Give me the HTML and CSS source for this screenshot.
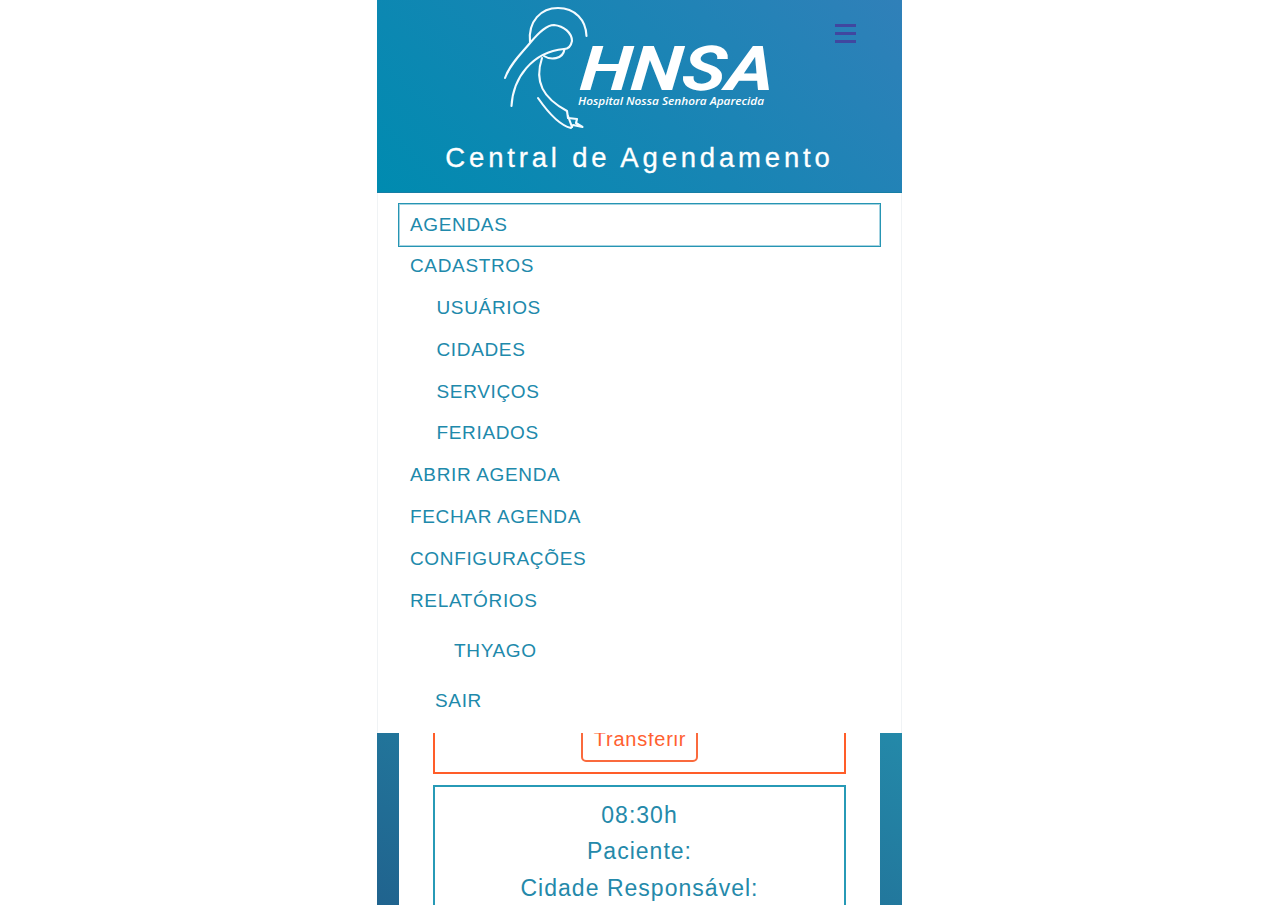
FILE: index.html
```html
<!DOCTYPE html>
<html lang="pt-BR">
<head>
<meta charset="utf-8">
<title>Central de Agendamento</title>
<link rel="stylesheet" href="styles.css">
</head>
<body>
<div class="phone">
  <header class="header">
    <svg class="logo" viewBox="0 0 290 134" role="img" aria-label="HNSA">
      <g class="figure">
        <path d="M40 42C38 21 51 8 68 8C85 8 96 20 96.500 36"/>
        <path d="M15 78C20 64 31 54 40 43C50 31 57 25 64 25C74 26 82 33 82 41C81 46 79 49 74 49C42 52 23 78 21.500 106"/>
        <path d="M54 56C60 60 73 60 74.500 49"/>
        <path d="M52 58C44 82 53 98 77 111L78 118L87 119L86 123L92.500 127L83 125L81 128C68 125 57 111 48 98"/>
        <path d="M78 116L82 127"/>
      </g>
      <text class="brand" transform="translate(89 90) skewX(-5)" textLength="194" lengthAdjust="spacingAndGlyphs">HNSA</text>
      <text class="tagline" x="88" y="105" textLength="186" lengthAdjust="spacingAndGlyphs">Hospital Nossa Senhora Aparecida</text>
    </svg>
    <button class="toggle" aria-label="Menu"><i></i><i></i><i></i></button>
    <h1 class="title">Central de Agendamento</h1>
  </header>
  <nav class="menu">
    <a class="item active">AGENDAS</a>
    <a class="item">CADASTROS</a>
    <a class="item sub">USUÁRIOS</a>
    <a class="item sub">CIDADES</a>
    <a class="item sub">SERVIÇOS</a>
    <a class="item sub">FERIADOS</a>
    <a class="item">ABRIR AGENDA</a>
    <a class="item">FECHAR AGENDA</a>
    <a class="item">CONFIGURAÇÕES</a>
    <a class="item">RELATÓRIOS</a>
    <a class="item user">THYAGO</a>
    <a class="item exit">SAIR</a>
  </nav>
  <main class="page">
    <div class="sheet">
      <section class="card busy"><button class="transfer">Transferir</button></section>
      <section class="card free">
        <p>08:30h</p>
        <p>Paciente:</p>
        <p>Cidade Responsável:</p>
      </section>
    </div>
  </main>
</div>
</body>
</html>
```
FILE: styles.css
```css
* { box-sizing: border-box; }
body { margin: 0; height: 905px; overflow: hidden; background: #fff; font-family: "Liberation Sans", Arial, sans-serif; }
.phone { width: 525px; height: 905px; margin-left: 377px; display: flex; flex-direction: column; overflow: hidden; }
.header { position: relative; flex: none; height: 193px; background: linear-gradient(45deg, #008bb0 0%, #1785b4 50%, #3080b9 100%); border-bottom: 1px solid #167ea5; display: flex; flex-direction: column; align-items: center; }
.logo { display: block; width: 290px; height: 134px; margin-left: -9px; overflow: visible; }
.figure { fill: none; stroke: #f4fbff; stroke-width: 2.1; stroke-linecap: round; stroke-linejoin: round; }
.brand { font: italic 700 62px Roboto, sans-serif; fill: #fff; }
.tagline { font: italic 600 10.2px "Open Sans", sans-serif; fill: #fff; }
.toggle { position: absolute; left: 457px; top: 24px; width: 23px; height: 20px; padding: 0 1px; border: 0; background: none; display: flex; flex-direction: column; gap: 5px; }
.toggle i { height: 3px; flex: none; background: #4047a0; }
.title { margin: 6px 0 0; font-size: 27.5px; font-weight: 400; line-height: 36px; letter-spacing: 3.82px; color: #fff; white-space: nowrap; -webkit-text-stroke: 0.3px #fff; }
.menu { flex: none; height: 540px; padding: 10px 20px 0; background: #fff; border: solid #f0f3f5; border-width: 0 1px; display: flex; flex-direction: column; }
.item { flex: none; height: 41.87px; line-height: 42px; padding-left: 12px; font-size: 19px; letter-spacing: 0.65px; color: #2089ab; }
.active { height: 44px; line-height: 42px; margin-bottom: -2px; padding-left: 11px; border: 1px solid #2695b3; box-shadow: inset 0 0 0 1px #a5d3e1; }
.sub { padding-left: 38.5px; }
.user { height: 50.4px; line-height: 50px; margin-top: 4px; padding-left: 56px; }
.exit { height: 50.4px; line-height: 50px; padding-left: 37px; }
.page { flex: 1; padding: 0 22px; background: linear-gradient(22deg, #20638e 0%, #2489a9 100%); }
.sheet { height: 100%; padding: 0 34px; background: #fff; display: flex; flex-direction: column; gap: 11px; }
.card { text-align: center; }
.busy { height: 41px; border: solid #ff5d29; border-width: 0 2px 2px; display: flex; justify-content: center; align-items: flex-start; overflow: hidden; }
.transfer { width: 117px; height: 44px; margin-top: -15px; padding: 0 0 2px 1px; border: 2px solid #fa6a3d; border-radius: 5px; background: #fff; color: #ff6030; font: 20px/38px "Liberation Sans", Arial, sans-serif; letter-spacing: 0.75px; }
.free { flex: 1; padding-top: 10px; border: solid #279ab6; border-width: 2px 2px 0; color: #2489aa; }
.free p { margin: 0; font-size: 23px; line-height: 36.4px; letter-spacing: 1.02px; }
```
